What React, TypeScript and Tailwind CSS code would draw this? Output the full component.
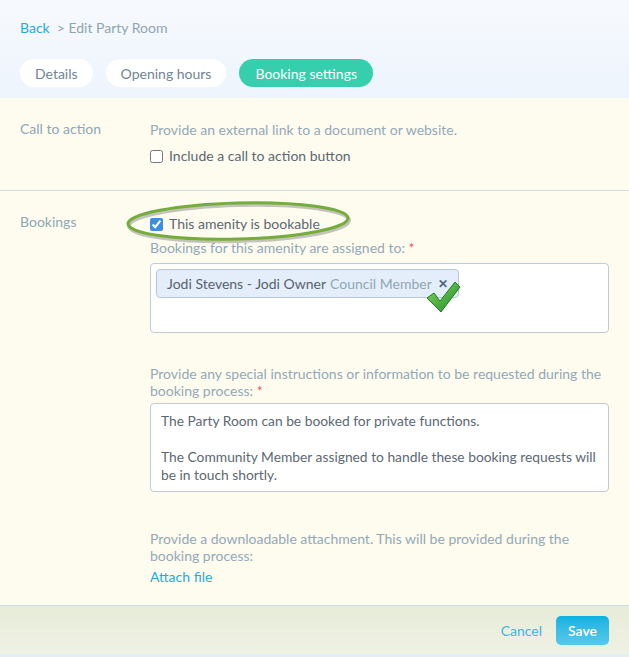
import { useState } from "react";

const font = { fontFamily: "Lato, 'Open Sans', sans-serif" };

function Tab({ label, active }: { label: string; active?: boolean }) {
  return (
    <button
      className={
        active
          ? "h-[28px] px-[16px] rounded-full bg-[#36cfad] text-white text-[14px]"
          : "h-[28px] px-[15px] rounded-full bg-white text-[#6f8594] text-[14px]"
      }
    >
      {label}
    </button>
  );
}

function GreenTick() {
  return (
    <svg width="36" height="34" viewBox="0 0 36 34" className="absolute left-[274px] top-[16px]">
      <defs>
        <linearGradient id="tick" x1="0" y1="0" x2="1" y2="1">
          <stop offset="0" stopColor="#86d85e" />
          <stop offset="1" stopColor="#1e8a26" />
        </linearGradient>
      </defs>
      <path
        d="M2 18 L9 13 L15 21 L30 2 L35 7 L16 32 Z"
        fill="url(#tick)"
        stroke="#1f7a22"
        strokeWidth="1"
        strokeLinejoin="round"
      />
    </svg>
  );
}

export default function App() {
  const [cta, setCta] = useState(false);
  const [bookable, setBookable] = useState(true);

  return (
    <div className="w-[629px] h-[657px] bg-[#fefcef] flex flex-col text-[14px]" style={font}>
      {/* Header */}
      <div className="h-[98px] bg-gradient-to-b from-[#f7fafd] to-[#edf4fd] px-5 pt-[19px]">
        <div className="flex gap-[7px] text-[14px] leading-[18px]">
          <span className="text-[#1eaae2]">Back</span>
          <span className="text-[#90a4b2]">&gt; Edit Party Room</span>
        </div>
        <div className="flex gap-[13px] mt-[22px]">
          <Tab label="Details" />
          <Tab label="Opening hours" />
          <Tab label="Booking settings" active />
        </div>
      </div>

      {/* Call to action */}
      <div className="flex px-5 pt-[22px] pb-[25px] border-b border-[#cfdde7]">
        <div className="w-[130px] text-[#8ea7b6] leading-[18px]">Call to action</div>
        <div className="flex-1">
          <p className="text-[#93a9b7] leading-[18px] mt-[1px]">Provide an external link to a document or website.</p>
          <label className="flex items-center gap-[6px] mt-[8px] text-[#5b6873] leading-[18px]">
            <input
              type="checkbox"
              checked={cta}
              onChange={(e) => setCta(e.target.checked)}
              className="w-[13px] h-[13px] m-0"
            />
            Include a call to action button
          </label>
        </div>
      </div>

      {/* Bookings */}
      <div className="flex-1 flex px-5 pt-[22px]">
        <div className="w-[130px] text-[#8ea7b6] leading-[18px]">Bookings</div>
        <div className="flex-1">
          <div className="relative">
            <label className="flex items-center gap-[6px] text-[#5b6873] leading-[18px] pt-[2px]">
              <input
                type="checkbox"
                checked={bookable}
                onChange={(e) => setBookable(e.target.checked)}
                className="w-[13px] h-[13px] m-0 accent-[#3a8ee6]"
              />
              This amenity is bookable
            </label>
            {/* highlight ring drawn over the checkbox row */}
            <svg width="236" height="50" viewBox="0 0 236 50" className="absolute left-[-30px] top-[-15px] pointer-events-none">
              <g transform="rotate(-1.5 118 23)">
                <ellipse cx="118" cy="23" rx="110" ry="18" fill="none" stroke="#6f6f6f" strokeOpacity="0.4" strokeWidth="4" transform="translate(1,2)" />
                <ellipse cx="118" cy="23" rx="110" ry="18" fill="none" stroke="#74ad3c" strokeWidth="3" />
              </g>
            </svg>
          </div>

          <p className="text-[#93a9b7] leading-[18px] mt-[6px]">
            Bookings for this amenity are assigned to: <span className="text-[#e55a5a]">*</span>
          </p>
          <div className="relative mt-[6px] h-[70px] bg-white border border-[#bccbd6] rounded-[4px] p-[5px]">
            <span className="inline-flex items-center h-[29px] px-[10px] bg-[#e4eefa] border border-[#b6c9dc] rounded-[4px] text-[14px]">
              <span className="text-[#56636e]">Jodi Stevens - Jodi Owner</span>
              <span className="text-[#8fa7b6] ml-[4px]">Council Member</span>
              <span className="text-[#4d6a87] ml-[6px] text-[12px] font-bold">✕</span>
            </span>
            <GreenTick />
          </div>

          <p className="text-[#93a9b7] leading-[17px] mt-[32px]">
            Provide any special instructions or information to be requested during the booking process:{" "}
            <span className="text-[#e55a5a]">*</span>
          </p>
          <div className="mt-[4px] h-[89px] bg-white border border-[#bccbd6] rounded-[4px] pl-[10px] pr-[4px] pt-[8px] text-[#5b6873] text-[13.8px] leading-[18px]">
            <p>The Party Room can be booked for private functions.</p>
            <p className="mt-[18px]">The Community Member assigned to handle these booking requests will be in touch shortly.</p>
          </div>

          <p className="text-[#93a9b7] leading-[17px] mt-[38px]">
            Provide a downloadable attachment. This will be provided during the booking process:
          </p>
          <p className="text-[#1eaae2] leading-[18px] mt-[4px]">Attach file</p>
        </div>
      </div>

      {/* Footer */}
      <div className="h-[52px] border-t border-[#cfdde7] bg-gradient-to-b from-[#e7ebd8] to-[#eff2e4] flex items-center justify-end gap-[14px] px-5 border-b-[3px] border-b-[#e4eef8]">
        <span className="text-[#3fb6e3]">Cancel</span>
        <button className="h-[29px] px-[12px] rounded-[5px] bg-gradient-to-b from-[#08b2e2] to-[#56c9ea] text-white text-[14px] font-semibold">
          Save
        </button>
      </div>
    </div>
  );
}
